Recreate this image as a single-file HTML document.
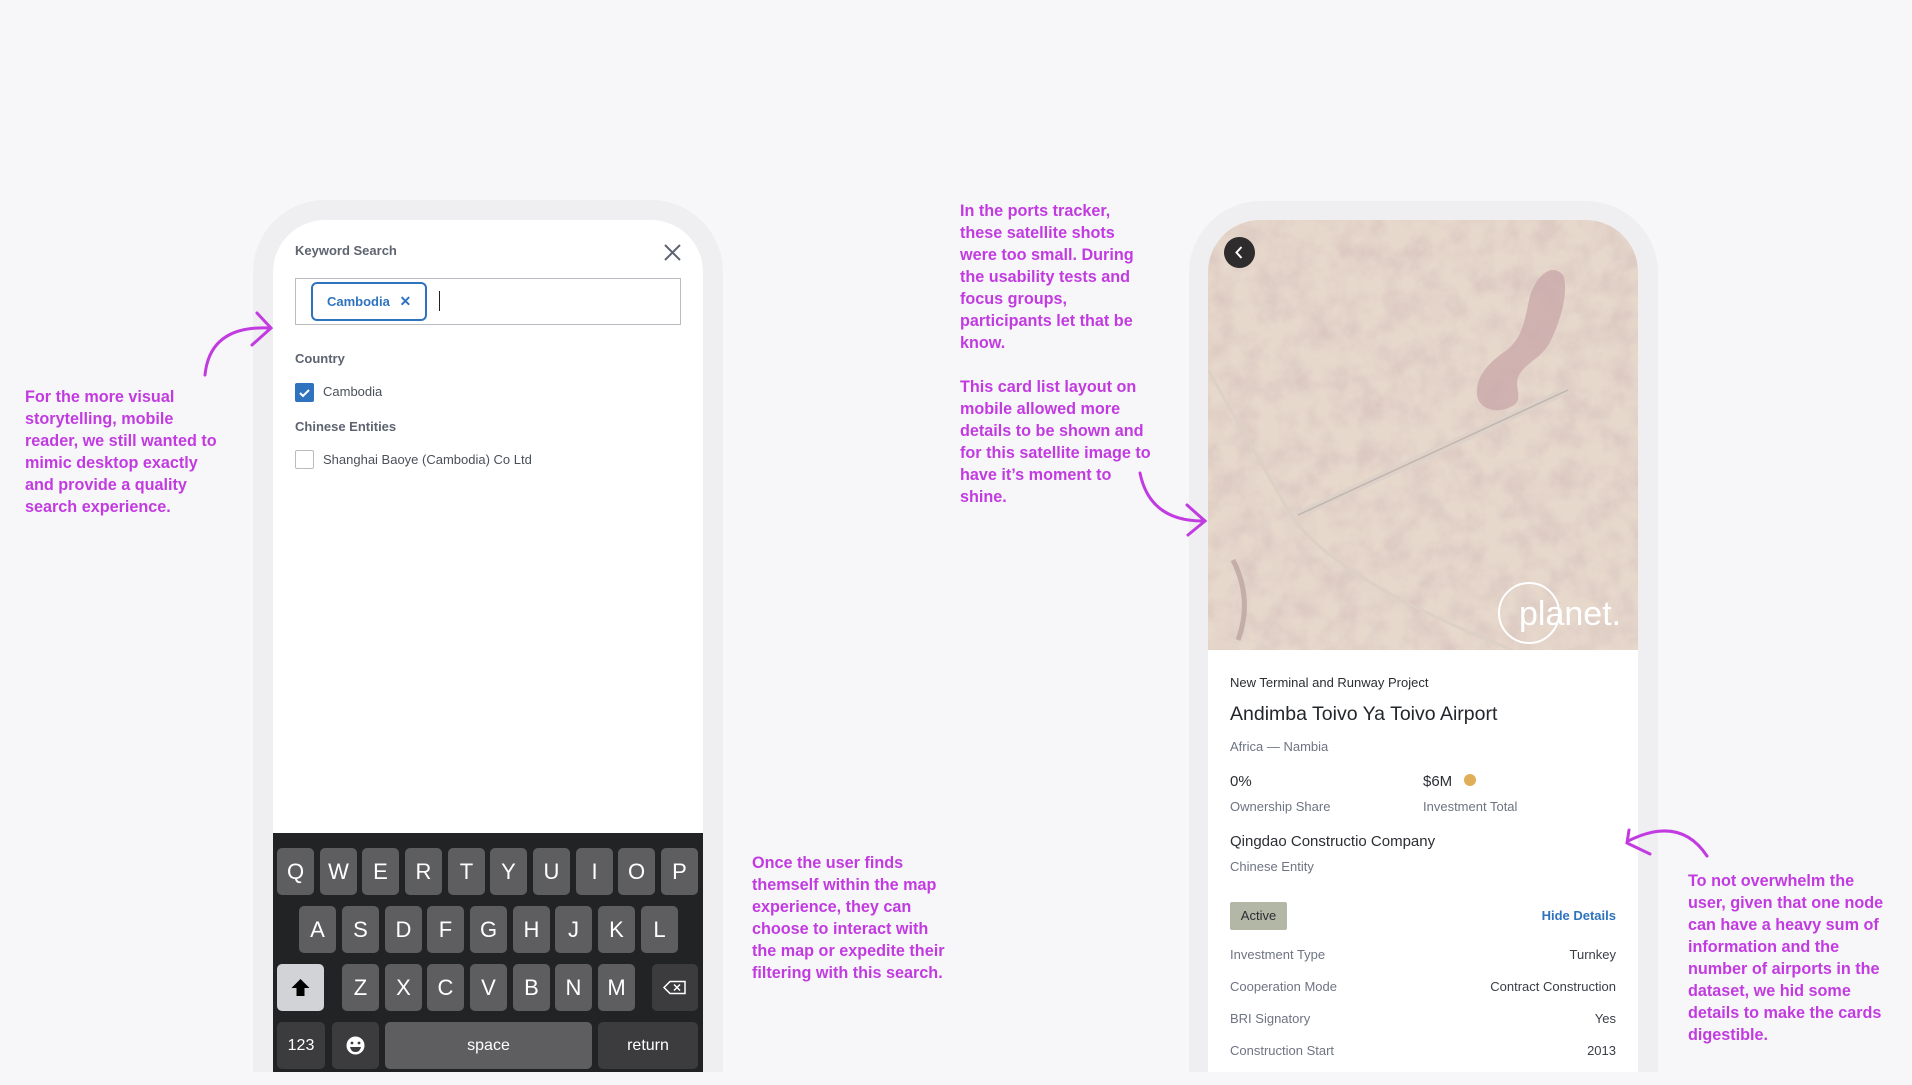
<!DOCTYPE html>
<html><head><meta charset="utf-8">
<style>
*{margin:0;padding:0;box-sizing:border-box}
body{width:1912px;height:1072px;overflow:hidden;background:#f7f7f9;font-family:"Liberation Sans",sans-serif;position:relative}
.ann{position:absolute;color:#c23be0;font-weight:bold;font-size:16.2px;line-height:22px;white-space:nowrap}
.frame{position:absolute;background:#efeff2;border-radius:72px 72px 0 0}
.screen{position:absolute;background:#fff;border-radius:52px 52px 0 0;overflow:hidden}
.a{position:absolute;white-space:nowrap}
.key{position:absolute;width:37px;height:47px;background:#5e5e60;border-radius:5px;color:#fff;font-size:22px;text-align:center;line-height:47px}
.dk{background:#3c3c3e}
.g{color:#6d7482}
</style></head><body>

<div class="frame" style="left:253px;top:200px;width:470px;height:872px"></div>
<div class="screen" style="left:273px;top:220px;width:430px;height:852px">
  <div class="a" style="left:22px;top:23px;font-size:13px;font-weight:bold;color:#5d6470">Keyword Search</div>
  <svg class="a" style="left:391px;top:24px" width="17" height="17" viewBox="0 0 17 17"><path d="M1 1L16 16M16 1L1 16" stroke="#5d6470" stroke-width="2"/></svg>
  <div class="a" style="left:22px;top:58px;width:386px;height:47px;border:1px solid #b9bcc1"></div>
  <div class="a" style="left:38px;top:62px;width:116px;height:39px;border:2px solid #2f73bf;border-radius:6px;color:#2f73bf;font-size:13px;font-weight:bold;line-height:35px;padding-left:14px">Cambodia <span style="margin-left:6px;font-size:14px">✕</span></div>
  <div class="a" style="left:166px;top:71px;width:1px;height:20px;background:#222"></div>
  <div class="a" style="left:22px;top:131px;font-size:13px;font-weight:bold;color:#5d6470">Country</div>
  <div class="a" style="left:22px;top:163px;width:19px;height:19px;background:#2f73bf;border-radius:2px"><svg width="19" height="19"><path d="M5 10l3 3 6-6" stroke="#fff" stroke-width="2" fill="none"/></svg></div>
  <div class="a" style="left:50px;top:164px;font-size:13px;color:#4a505a">Cambodia</div>
  <div class="a" style="left:22px;top:199px;font-size:13px;font-weight:bold;color:#5d6470">Chinese Entities</div>
  <div class="a" style="left:22px;top:230px;width:19px;height:19px;border:1px solid #b9bcc1;border-radius:2px"></div>
  <div class="a" style="left:50px;top:232px;font-size:13px;color:#4a505a">Shanghai Baoye (Cambodia) Co Ltd</div>
  <div class="a" style="left:0;top:613px;width:430px;height:240px;background:#222325"></div>
</div>
<div>
<div class="key" style="left:277px;top:848px">Q</div><div class="key" style="left:320px;top:848px">W</div><div class="key" style="left:362px;top:848px">E</div><div class="key" style="left:405px;top:848px">R</div><div class="key" style="left:448px;top:848px">T</div><div class="key" style="left:490px;top:848px">Y</div><div class="key" style="left:533px;top:848px">U</div><div class="key" style="left:576px;top:848px">I</div><div class="key" style="left:618px;top:848px">O</div><div class="key" style="left:661px;top:848px">P</div>
<div class="key" style="left:299px;top:906px">A</div><div class="key" style="left:342px;top:906px">S</div><div class="key" style="left:385px;top:906px">D</div><div class="key" style="left:427px;top:906px">F</div><div class="key" style="left:470px;top:906px">G</div><div class="key" style="left:513px;top:906px">H</div><div class="key" style="left:555px;top:906px">J</div><div class="key" style="left:598px;top:906px">K</div><div class="key" style="left:641px;top:906px">L</div>
<div class="key" style="left:277px;top:964px;width:47px;background:#d2d3d6"><svg width="47" height="47"><path d="M23.5 15l-9 9h5v8h8v-8h5z" fill="#000"/></svg></div>
<div class="key" style="left:342px;top:964px">Z</div><div class="key" style="left:385px;top:964px">X</div><div class="key" style="left:427px;top:964px">C</div><div class="key" style="left:470px;top:964px">V</div><div class="key" style="left:513px;top:964px">B</div><div class="key" style="left:555px;top:964px">N</div><div class="key" style="left:598px;top:964px">M</div>
<div class="key dk" style="left:652px;top:964px;width:46px"><svg width="46" height="47"><path d="M12 23.5l6-6h15v12H18z" stroke="#fff" stroke-width="1.5" fill="none"/><path d="M22 20.5l6 6M28 20.5l-6 6" stroke="#fff" stroke-width="1.5"/></svg></div>
<div class="key dk" style="left:277px;top:1022px;width:48px;font-size:16px">123</div>
<div class="key dk" style="left:332px;top:1022px;width:47px"><svg width="47" height="47"><circle cx="23.5" cy="23.5" r="9" fill="#fff"/><circle cx="20" cy="21" r="1.4" fill="#3c3c3e"/><circle cx="27" cy="21" r="1.4" fill="#3c3c3e"/><path d="M18 25h11q-1 5-5.5 5T18 25z" fill="#3c3c3e"/></svg></div>
<div class="key" style="left:385px;top:1022px;width:207px;font-size:16px">space</div>
<div class="key dk" style="left:598px;top:1022px;width:100px;font-size:16px">return</div>
</div>

<div class="frame" style="left:1189px;top:201px;width:469px;height:871px"></div>
<div class="screen" style="left:1208px;top:220px;width:430px;height:852px">
  <svg class="a" style="left:0;top:0" width="430" height="430" viewBox="0 0 430 430">
    <defs><filter id="n"><feTurbulence type="fractalNoise" baseFrequency="0.04" numOctaves="4" seed="7"/><feColorMatrix values="0 0 0 0 0.62  0 0 0 0 0.48  0 0 0 0 0.46  0 0 0 1.3 -0.45"/></filter></defs>
    <rect width="430" height="430" fill="#e7d8cc"/>
    <rect width="430" height="430" filter="url(#n)" opacity="0.7"/>
    <path d="M355 55c6 15-2 45-12 65-8 18-25 22-32 35-6 12 5 22-5 30-15 10-35 5-37-10-2-20 15-35 30-45 15-12 18-30 22-50 4-18 20-40 34-25z" fill="#c8a5a8" opacity="0.75"/>
    <path d="M90 295L360 170" stroke="#ddd2ca" stroke-width="8"/>
    <path d="M90 295L360 170" stroke="#c4b4ab" stroke-width="1.5"/>
    <path d="M0 150Q40 220 80 290T330 440" stroke="#ddd0c5" stroke-width="3" fill="none"/>
    <path d="M25 340q20 40 5 80" stroke="#a88a87" stroke-width="5" fill="none" opacity=".5"/>
    <circle cx="321" cy="393" r="30" stroke="#fff" stroke-width="2" fill="none"/>
    <text x="311" y="405" fill="#fff" font-size="34" font-family="Liberation Sans">planet.</text>
  </svg>
  <div class="a" style="left:16px;top:17px;width:31px;height:31px;border-radius:50%;background:#2e2c2c"><svg width="31" height="31"><path d="M17.5 10l-5 5.5 5 5.5" stroke="#fff" stroke-width="2" fill="none"/></svg></div>
  <div class="a" style="left:22px;top:455px;font-size:13px;color:#2b2e33">New Terminal and Runway Project</div>
  <div class="a" style="left:22px;top:483px;font-size:19.5px;color:#23262b">Andimba Toivo Ya Toivo Airport</div>
  <div class="a g" style="left:22px;top:519px;font-size:13px">Africa — Nambia</div>
  <div class="a" style="left:22px;top:553px;font-size:15px;color:#2b2e33">0%</div>
  <div class="a" style="left:215px;top:553px;font-size:15px;color:#2b2e33">$6M <span style="display:inline-block;width:12px;height:12px;border-radius:50%;background:#e0ad58;margin-left:8px;vertical-align:0"></span></div>
  <div class="a g" style="left:22px;top:579px;font-size:13px">Ownership Share</div>
  <div class="a g" style="left:215px;top:579px;font-size:13px">Investment Total</div>
  <div class="a" style="left:22px;top:613px;font-size:15px;color:#2b2e33">Qingdao Constructio Company</div>
  <div class="a g" style="left:22px;top:639px;font-size:13px">Chinese Entity</div>
  <div class="a" style="left:22px;top:682px;width:57px;height:28px;background:#b3b7a5;border-radius:2px;font-size:13px;color:#2b2e33;line-height:28px;text-align:center">Active</div>
  <div class="a" style="right:22px;top:688px;font-size:13px;font-weight:bold;color:#2f73bf">Hide Details</div>
  <div class="a g" style="left:22px;top:727px;font-size:13px">Investment Type</div><div class="a" style="right:22px;top:727px;font-size:13px;color:#3a3e45">Turnkey</div>
  <div class="a g" style="left:22px;top:759px;font-size:13px">Cooperation Mode</div><div class="a" style="right:22px;top:759px;font-size:13px;color:#3a3e45">Contract Construction</div>
  <div class="a g" style="left:22px;top:791px;font-size:13px">BRI Signatory</div><div class="a" style="right:22px;top:791px;font-size:13px;color:#3a3e45">Yes</div>
  <div class="a g" style="left:22px;top:823px;font-size:13px">Construction Start</div><div class="a" style="right:22px;top:823px;font-size:13px;color:#3a3e45">2013</div>
</div>

<div class="ann" style="left:25px;top:386px">For the more visual<br>storytelling, mobile<br>reader, we still wanted to<br>mimic desktop exactly<br>and provide a quality<br>search experience.</div>
<div class="ann" style="left:960px;top:200px">In the ports tracker,<br>these satellite shots<br>were too small. During<br>the usability tests and<br>focus groups,<br>participants let that be<br>know.<br><br>This card list layout on<br>mobile allowed more<br>details to be shown and<br>for this satellite image to<br>have it’s moment to<br>shine.</div>
<div class="ann" style="left:752px;top:852px">Once the user finds<br>themself within the map<br>experience, they can<br>choose to interact with<br>the map or expedite their<br>filtering with this search.</div>
<div class="ann" style="left:1688px;top:870px">To not overwhelm the<br>user, given that one node<br>can have a heavy sum of<br>information and the<br>number of airports in the<br>dataset, we hid some<br>details to make the cards<br>digestible.</div>

<svg style="position:absolute;left:0;top:0" width="1912" height="1072">
  <g stroke="#c23be0" stroke-width="3" fill="none" stroke-linecap="round">
    <path d="M205 375Q210 325 270 328"/><path d="M257 313L271 328L252 345"/>
    <path d="M1140 473Q1150 522 1205 521"/><path d="M1187 505L1205 521L1188 535"/>
    <path d="M1707 856Q1680 815 1628 841"/><path d="M1629 830L1627 843L1650 854"/>
  </g>
</svg>
</body></html>
